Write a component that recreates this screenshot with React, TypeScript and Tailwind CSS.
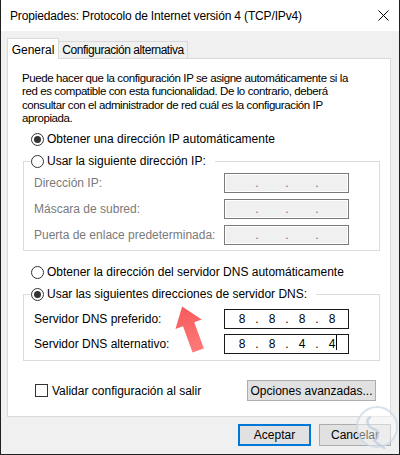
import React from "react"

const font = { fontFamily: '"Liberation Sans", Arial, sans-serif' }

function Radio({ checked }: { checked?: boolean }) {
  return (
    <span className="flex h-[13px] w-[13px] shrink-0 items-center justify-center rounded-full border border-[#333333] bg-white">
      {checked && <span className="h-[7px] w-[7px] rounded-full bg-[#333333]" />}
    </span>
  )
}

function RadioRow({ label, checked }: { label: string; checked?: boolean }) {
  return (
    <div className="flex h-[22px] items-center gap-[3px]">
      <Radio checked={checked} />
      <span>{label}</span>
    </div>
  )
}

function IpBox({ parts, disabled, caret }: { parts: string[]; disabled?: boolean; caret?: boolean }) {
  return (
    <div
      className={
        disabled
          ? "flex h-[20px] w-[125px] items-center border border-[#7a7a7a] bg-[#f0f0f0] pl-[4px] text-[#6d6d6d] shadow-[inset_0_0_0_1px_#ffffff]"
          : "flex h-[20px] w-[125px] items-center border border-[#1a1a1a] bg-white pl-[4px] text-black"
      }
    >
      {parts.map((p, i) => (
        <React.Fragment key={i}>
          <span className="relative w-[26px] text-center">
            {p}
            {caret && i === 3 && <span className="absolute left-[17px] top-[0px] h-[15px] w-px bg-black" />}
          </span>
          {i < 3 && <span className="w-[4px] text-center">.</span>}
        </React.Fragment>
      ))}
    </div>
  )
}

function FieldRow({ label, children, disabled }: { label: string; children: React.ReactNode; disabled?: boolean }) {
  return (
    <div className="flex items-center">
      <span className={disabled ? "w-[200px] pl-[10px] text-[#7a7a7a]" : "w-[200px] pl-[10px] text-black"}>{label}</span>
      {children}
    </div>
  )
}

export default function App() {
  return (
    <div
      className="relative flex h-[455px] w-[400px] flex-col overflow-hidden border-x border-b border-[#1f1f1f] bg-[#f0f0f0] text-[12px] text-black"
      style={font}
    >
      {/* title bar */}
      <div className="flex h-[31px] items-center justify-between bg-white pl-[9px] pr-[10px]">
        <span className="text-[12px] tracking-[-0.15px]">Propiedades: Protocolo de Internet versión 4 (TCP/IPv4)</span>
        <svg width="11" height="11" viewBox="0 0 11 11">
          <path d="M0.5 0.5 L10.5 10.5 M10.5 0.5 L0.5 10.5" stroke="#000" strokeWidth="1" fill="none" />
        </svg>
      </div>

      <div className="flex flex-col pl-[6px] pr-[8px] pt-[7px]">
        {/* tabs */}
        <div className="relative z-10 flex h-[21px] items-end">
          <div className="flex h-[21px] w-[52px] items-start justify-center border-x border-t border-[#d9d9d9] bg-white pt-[2px]">
            General
          </div>
          <div className="mb-px flex h-[17px] w-[129px] items-center justify-center whitespace-nowrap border-r border-t border-[#d9d9d9] bg-[#f0f0f0] tracking-[-0.45px]">
            Configuración alternativa
          </div>
        </div>

        {/* panel */}
        <div className="-mt-px flex h-[359px] flex-col border border-[#d9d9d9] bg-white">
          <p className="whitespace-nowrap pl-[14px] pt-[13px] text-[11.5px] leading-[13.33px] tracking-[-0.4px]">
            Puede hacer que la configuración IP se asigne automáticamente si la
            <br />
            red es compatible con esta funcionalidad. De lo contrario, deberá
            <br />
            consultar con el administrador de red cuál es la configuración IP
            <br />
            apropiada.
          </p>

          <div className="ml-[23px] mt-[3px]">
            <RadioRow label="Obtener una dirección IP automáticamente" checked />
          </div>

          <fieldset className="ml-[15px] mr-[10px] border border-[#dcdcdc] pb-[5px]">
            <legend className="ml-[7px] pr-[9px]">
              <RadioRow label="Usar la siguiente dirección IP:" />
            </legend>
            <div className="flex flex-col gap-[6px] pt-px">
              <FieldRow label="Dirección IP:" disabled>
                <IpBox parts={["", "", "", ""]} disabled />
              </FieldRow>
              <FieldRow label="Máscara de subred:" disabled>
                <IpBox parts={["", "", "", ""]} disabled />
              </FieldRow>
              <FieldRow label="Puerta de enlace predeterminada:" disabled>
                <IpBox parts={["", "", "", ""]} disabled />
              </FieldRow>
            </div>
          </fieldset>

          <div className="ml-[23px] mt-[10px]">
            <RadioRow label="Obtener la dirección del servidor DNS automáticamente" />
          </div>

          <fieldset className="ml-[15px] mr-[10px] border border-[#dcdcdc] pb-[6px]">
            <legend className="ml-[7px] pr-[9px]">
              <RadioRow label="Usar las siguientes direcciones de servidor DNS:" checked />
            </legend>
            <div className="flex flex-col gap-[5px] pt-[4px]">
              <FieldRow label="Servidor DNS preferido:">
                <IpBox parts={["8", "8", "8", "8"]} />
              </FieldRow>
              <FieldRow label="Servidor DNS alternativo:">
                <IpBox parts={["8", "8", "4", "4"]} caret />
              </FieldRow>
            </div>
          </fieldset>

          <div className="mt-[19px] flex items-center justify-between pl-[27px] pr-[14px]">
            <div className="flex items-center gap-[4px]">
              <span className="h-[13px] w-[13px] border border-[#333333] bg-white" />
              <span>Validar configuración al salir</span>
            </div>
            <button className="h-[21px] w-[129px] border border-[#adadad] bg-[#e1e1e1]">Opciones avanzadas...</button>
          </div>
        </div>

        {/* dialog buttons */}
        <div className="mt-[7px] flex justify-end gap-[8px]">
          <button className="h-[22px] w-[73px] border-2 border-[#0078d7] bg-[#e1e1e1]">Aceptar</button>
          <button className="h-[22px] w-[72px] border border-[#adadad] bg-[#e1e1e1]">Cancelar</button>
        </div>
      </div>

      {/* red arrow annotation */}
      <svg className="absolute left-[164px] top-[300px]" width="50" height="56" viewBox="0 0 50 56">
        <defs>
          <linearGradient id="ar" x1="0" y1="0" x2="0" y2="1">
            <stop offset="0" stopColor="#f55a5a" />
            <stop offset="1" stopColor="#ff7a7a" />
          </linearGradient>
        </defs>
        <g transform="rotate(-20 25 28)">
          <path d="M25 5 L39 24 L31 24 L31 52 L19 52 L19 24 L11 24 Z" fill="url(#ar)" />
        </g>
      </svg>

      {/* watermark */}
      <svg className="absolute left-[346px] top-[405px] opacity-80" width="54" height="50" viewBox="0 0 54 50">
        <circle cx="30" cy="22" r="20" fill="#ffffff" fillOpacity="0.55" stroke="#cfdbe6" strokeWidth="2" />
        <path d="M24 12 C18 14 20 22 27 24 C33 26 32 34 26 36" stroke="#c4d3e0" strokeWidth="2.5" fill="none" />
        <path d="M28 36 C30 40 36 40 38 44" stroke="#c4d3e0" strokeWidth="2.5" fill="none" />
      </svg>
    </div>
  )
}
